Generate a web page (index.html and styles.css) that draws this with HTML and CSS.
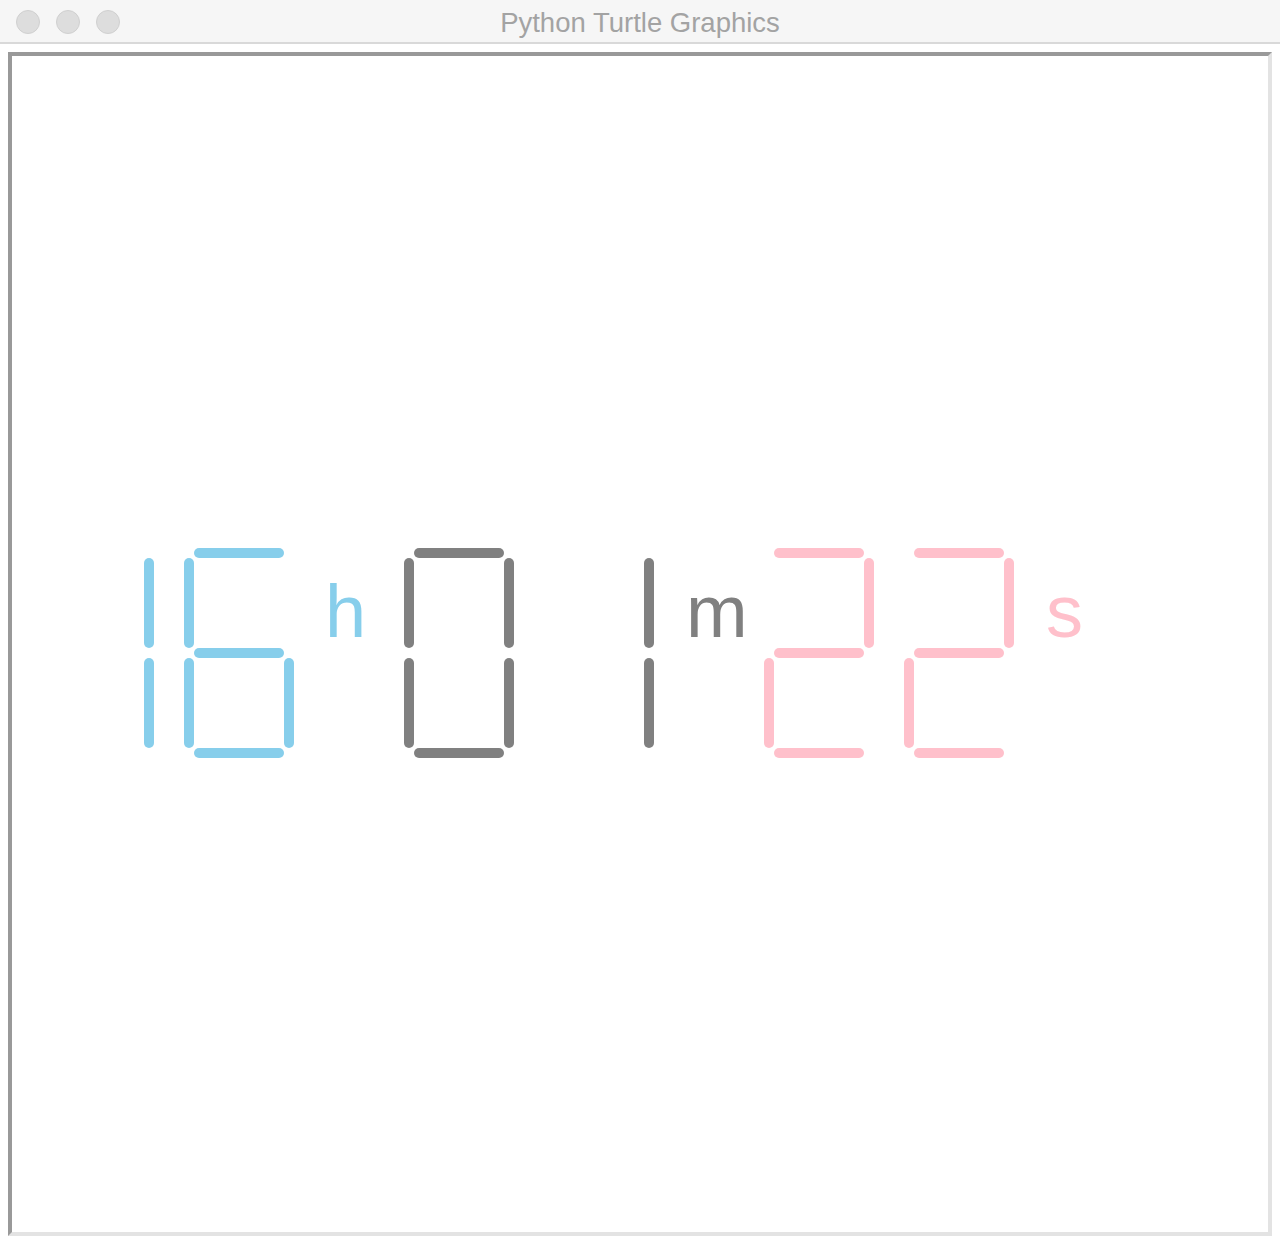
FILE: index.html
```html
<!DOCTYPE html>
<html>
<head>
<meta charset="utf-8">
<title>Python Turtle Graphics</title>
<link rel="stylesheet" href="styles.css">
</head>
<body>
<div class="window">
  <div class="titlebar">
    <div class="lights">
      <span class="light"></span>
      <span class="light"></span>
      <span class="light"></span>
    </div>
    <div class="title">Python Turtle Graphics</div>
  </div>
  <div class="body">
    <div class="canvas">
      <svg class="drawing" width="1256" height="1176" viewBox="12 56 1256 1176" xmlns="http://www.w3.org/2000/svg">
        <g class="seg blue">
          <!-- 1 at L=49 -->
          <line x1="149" y1="563" x2="149" y2="643"/>
          <line x1="149" y1="663" x2="149" y2="743"/>
          <!-- 6 at L=189 -->
          <line x1="199" y1="553" x2="279" y2="553"/>
          <line x1="189" y1="563" x2="189" y2="643"/>
          <line x1="199" y1="653" x2="279" y2="653"/>
          <line x1="189" y1="663" x2="189" y2="743"/>
          <line x1="289" y1="663" x2="289" y2="743"/>
          <line x1="199" y1="753" x2="279" y2="753"/>
        </g>
        <g class="seg gray">
          <!-- 0 at L=409 -->
          <line x1="419" y1="553" x2="499" y2="553"/>
          <line x1="509" y1="563" x2="509" y2="643"/>
          <line x1="509" y1="663" x2="509" y2="743"/>
          <line x1="419" y1="753" x2="499" y2="753"/>
          <line x1="409" y1="663" x2="409" y2="743"/>
          <line x1="409" y1="563" x2="409" y2="643"/>
          <!-- 1 at L=549 -->
          <line x1="649" y1="563" x2="649" y2="643"/>
          <line x1="649" y1="663" x2="649" y2="743"/>
        </g>
        <g class="seg pink">
          <!-- 2 at L=769 -->
          <line x1="779" y1="553" x2="859" y2="553"/>
          <line x1="869" y1="563" x2="869" y2="643"/>
          <line x1="779" y1="653" x2="859" y2="653"/>
          <line x1="769" y1="663" x2="769" y2="743"/>
          <line x1="779" y1="753" x2="859" y2="753"/>
          <!-- 2 at L=909 -->
          <line x1="919" y1="553" x2="999" y2="553"/>
          <line x1="1009" y1="563" x2="1009" y2="643"/>
          <line x1="919" y1="653" x2="999" y2="653"/>
          <line x1="909" y1="663" x2="909" y2="743"/>
          <line x1="919" y1="753" x2="999" y2="753"/>
        </g>
        <text class="label label-blue" x="325" y="637">h</text>
        <text class="label label-gray" x="686" y="637">m</text>
        <text class="label label-pink" x="1046" y="637">s</text>
      </svg>
    </div>
  </div>
</div>
</body>
</html>
```

FILE: styles.css
```css
html, body {
  margin: 0;
  padding: 0;
  background: #ffffff;
}

.window {
  width: 1280px;
  height: 1244px;
  display: flex;
  flex-direction: column;
  background: #ffffff;
  font-family: "Liberation Sans", Arial, sans-serif;
}

.titlebar {
  height: 42px;
  flex: none;
  background: #f6f6f6;
  border-bottom: 2px solid #d9d9d9;
  display: flex;
  align-items: center;
  position: relative;
}

.lights {
  display: flex;
  gap: 16px;
  padding-left: 16px;
  padding-top: 2px;
}

.light {
  width: 22px;
  height: 22px;
  border-radius: 50%;
  background: #dddddd;
  border: 1px solid #d0d0d0;
}

.title {
  position: absolute;
  left: 0;
  right: 0;
  top: 4px;
  bottom: 0;
  display: flex;
  align-items: center;
  justify-content: center;
  font-size: 27.5px;
  color: #a3a3a3;
  pointer-events: none;
}

.body {
  flex: 1;
  padding: 8px 8px 8px 8px;
}

.canvas {
  width: 1256px;
  height: 1176px;
  border-style: solid;
  border-width: 4px;
  border-color: #999999 #e3e3e3 #e3e3e3 #999999;
  background: #ffffff;
}

.drawing {
  display: block;
}

.seg line {
  stroke-width: 10;
  stroke-linecap: round;
  fill: none;
}

.blue line { stroke: #87ceeb; }
.gray line { stroke: #808080; }
.pink line { stroke: #ffc0cb; }

.label {
  font-family: "Liberation Sans", Arial, sans-serif;
  font-size: 74px;
}

.label-blue { fill: #87ceeb; }
.label-gray { fill: #808080; }
.label-pink { fill: #ffc0cb; }
```
